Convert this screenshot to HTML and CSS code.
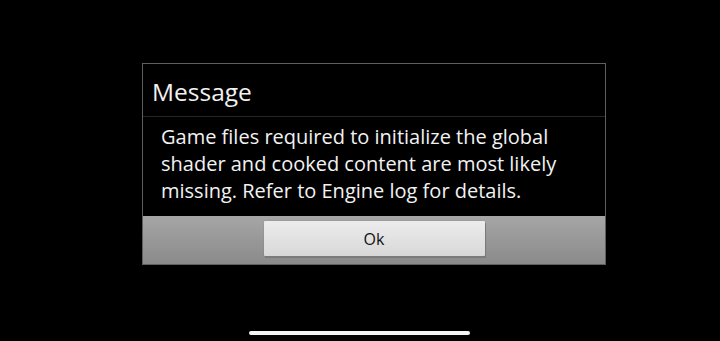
FILE: index.html
```html
<!DOCTYPE html>
<html>
<head>
<meta charset="utf-8">
<link rel="stylesheet" href="styles.css">
</head>
<body>
<div class="screen">
  <div class="dialog">
    <div class="title">Message</div>
    <div class="message">Game files required to initialize the global<br>shader and cooked content are most likely<br>missing. Refer to Engine log for details.</div>
    <div class="bar">
      <button class="ok">Ok</button>
    </div>
  </div>
  <div class="home-indicator"></div>
</div>
</body>
</html>
```
FILE: styles.css
```css
html, body {
  margin: 0;
  padding: 0;
  background: #000;
}
.screen {
  position: relative;
  width: 720px;
  height: 341px;
  overflow: hidden;
  font-family: "Open Sans", "Noto Sans", sans-serif;
  color: #f2f2f2;
  display: flex;
  flex-direction: column;
  align-items: flex-start;
}
.dialog {
  margin: 63px 0 0 142px;
  width: 462px;
  border: 1px solid #5e5e5e;
  background: #000;
  display: flex;
  flex-direction: column;
}
.title {
  height: 53px;
  box-sizing: border-box;
  padding: 15px 0 0 9px;
  font-size: 24.5px;
  line-height: 26px;
  border-bottom: 1px solid #262626;
}
.message {
  height: 99px;
  box-sizing: border-box;
  padding: 6px 0 0 18px;
  font-size: 20px;
  line-height: 27px;
}
.bar {
  height: 48px;
  box-sizing: border-box;
  padding-top: 5px;
  background: linear-gradient(#a6a6a6, #8a8a8a);
  display: flex;
  justify-content: center;
  align-items: flex-start;
}
.ok {
  width: 221px;
  height: 35px;
  margin: 0;
  border: none;
  border-radius: 1px;
  background: linear-gradient(#ececec, #d8d8d8);
  box-shadow: 1px 2px 0 #7a7a7a, 0 0 2px rgba(0,0,0,0.15);
  font-family: "Open Sans", "Noto Sans", sans-serif;
  font-size: 16px;
  color: #111;
  padding: 0;
}
.home-indicator {
  position: absolute;
  left: 249px;
  top: 331px;
  width: 221px;
  height: 4px;
  border-radius: 2px;
  background: #f4f4f4;
}
```
